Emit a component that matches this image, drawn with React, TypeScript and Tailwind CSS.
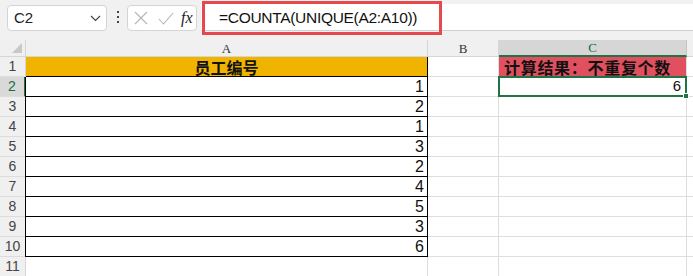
import React from "react";

const aVals = [1, 2, 1, 3, 2, 4, 5, 3, 6];

export default function App() {
  const rows = Array.from({ length: 11 }, (_, i) => i + 1);
  return (
    <div className="w-[693px] h-[276px] overflow-hidden bg-white" style={{ fontFamily: '"Liberation Sans", "Noto Sans CJK SC", sans-serif' }}>
      {/* top formula bar */}
      <div className="h-[40px] bg-[#f1f1f1] flex items-start relative">
        <div className="mt-[5px] ml-[7px] w-[100px] h-[26px] bg-white border border-[#d4d4d4] rounded-[4px] flex items-center justify-between pl-[6px] pr-[5px]">
          <span className="text-[15px] text-[#222]">C2</span>
          <svg width="11" height="7" viewBox="0 0 11 7"><path d="M1 1l4.5 4.5L10 1" fill="none" stroke="#444" strokeWidth="1.2" /></svg>
        </div>
        <div className="mt-[11px] ml-[9px] w-[3px] flex flex-col gap-[3px] items-center">
          <div className="w-[2px] h-[2px] bg-[#444]" />
          <div className="w-[2px] h-[2px] bg-[#444]" />
          <div className="w-[2px] h-[2px] bg-[#444]" />
        </div>
        <div className="mt-[5px] ml-[8px] w-[70px] h-[26px] bg-white border border-[#d4d4d4] rounded-[4px] flex items-center pl-[6px]">
          <svg width="14" height="14" viewBox="0 0 14 14"><path d="M1 1l12 12M13 1L1 13" stroke="#b5b5b5" strokeWidth="1.1" /></svg>
          <svg className="ml-[10px]" width="16" height="13" viewBox="0 0 16 13"><path d="M1 7l4.5 5L15 1" fill="none" stroke="#b5b5b5" strokeWidth="1.1" /></svg>
          <span className="ml-[7px] text-[16px] italic text-[#222]" style={{ fontFamily: '"Liberation Serif", serif' }}>fx</span>
        </div>
        <div className="mt-[4px] ml-[4px] flex-1 h-[27px] bg-white border-b border-[#d0d0d0]" />
        <div className="absolute left-[202px] top-[1px] w-[240px] h-[34px] border-[3px] border-[#e5484d] flex items-center pl-[14px]">
          <span className="text-[15.5px] text-[#111] tracking-[-0.3px]">=COUNTA(UNIQUE(A2:A10))</span>
        </div>
      </div>
      {/* grid */}
      <div className="grid grid-cols-[26px_402px_71px_188px_6px] grid-rows-[17px_repeat(11,20px)]">
        {/* header row */}
        <div className="bg-[#f0f0f0] border-r border-b border-[#d6d6d6] relative">
          <svg className="absolute right-[3px] bottom-[3px]" width="10" height="10" viewBox="0 0 10 10"><path d="M10 0V10H0Z" fill="#c8c8c8" /></svg>
        </div>
        {["A", "B"].map((c) => (
          <div key={c} className="bg-[#f0f0f0] border-r border-b border-[#d6d6d6] flex items-end justify-center text-[13px] leading-[15px] text-[#333]" style={{ fontFamily: '"Liberation Serif", serif' }}>{c}</div>
        ))}
        <div className="bg-[#d6d6d6] border-r border-[#c4c4c4] border-b-2 border-b-[#217346] flex items-end justify-center text-[13px] leading-[14px] text-[#1e6b40]" style={{ fontFamily: '"Liberation Serif", serif' }}>C</div>
        <div className="bg-[#f0f0f0] border-b border-[#d6d6d6]" />
        {rows.map((r) => {
          const isActive = r === 2;
          const aVal = r >= 2 && r <= 10 ? aVals[r - 2] : null;
          return (
            <React.Fragment key={r}>
              <div className={`${isActive ? "bg-[#d9d9d9] border-r-2 border-r-[#217346] text-[#1e6b40]" : "bg-[#f0f0f0] border-r border-[#d6d6d6] text-[#444]"} border-b border-b-[#dcdcdc] flex items-center justify-center text-[14px]`}>{r}</div>
              {r === 1 ? (
                <div className="bg-[#f0b400] border-b border-r border-black flex items-center justify-center font-bold text-[16px] text-[#111]" style={{ fontFamily: '"Noto Sans CJK SC", sans-serif' }}>员工编号</div>
              ) : aVal !== null ? (
                <div className="border-b border-r border-l border-black -ml-[1px] flex items-center justify-end pr-[3px] text-[16px] text-[#111]">{aVal}</div>
              ) : (
                <div className="border-b border-r border-[#dedede]" />
              )}
              <div className="border-b border-r border-[#dedede]" />
              {r === 1 ? (
                <div className="bg-[#e0505e] border-b border-r border-[#dedede] flex items-center pl-[5px] font-bold text-[16px] text-[#111] tracking-[0.7px]" style={{ fontFamily: '"Noto Sans CJK SC", sans-serif' }}>计算结果：不重复个数</div>
              ) : r === 2 ? (
                <div className="relative border-2 border-[#217346] -ml-[1px] -mt-[1px] flex items-center justify-end pr-[4px] text-[15px] text-[#111]">
                  6
                  <div className="absolute -right-[4px] -bottom-[4px] w-[6px] h-[6px] bg-[#217346] border border-white" />
                </div>
              ) : (
                <div className="border-b border-r border-[#dedede]" />
              )}
              <div className="border-b border-[#dedede]" />
            </React.Fragment>
          );
        })}
      </div>
    </div>
  );
}
